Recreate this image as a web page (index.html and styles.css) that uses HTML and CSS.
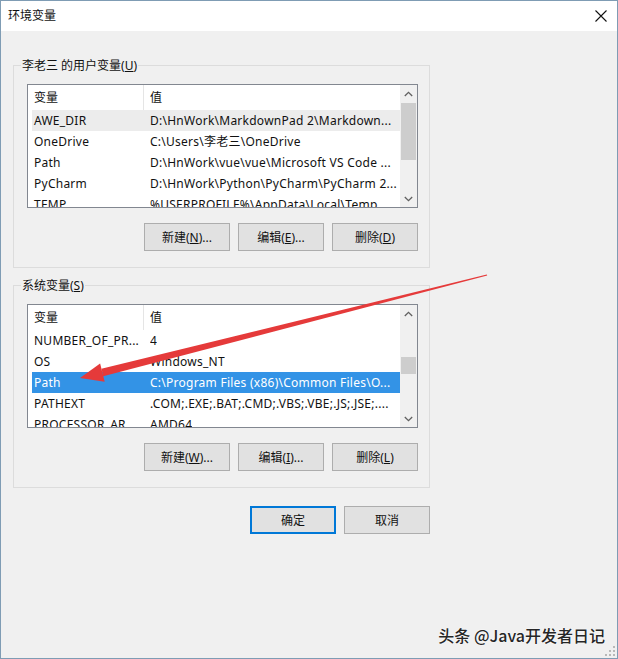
FILE: index.html
```html
<!DOCTYPE html>
<html lang="zh-CN">
<head>
<meta charset="utf-8">
<title>环境变量</title>
<link rel="stylesheet" href="styles.css">
</head>
<body>
<div class="window">
  <div class="titlebar">
    <span class="title">环境变量</span>
    <svg class="close" width="12" height="12" viewBox="0 0 12 12"><path d="M0.5 0.5 L11.5 11.5 M11.5 0.5 L0.5 11.5" stroke="#111" stroke-width="1.1" fill="none"/></svg>
  </div>
  <div class="content">
    <fieldset class="group">
      <legend class="legend">李老三 的用户变量(<u>U</u>)</legend>
      <div class="listbox">
        <div class="listmain">
          <div class="lheader"><span class="hcell hcell1">变量</span><span class="hcell">值</span></div>
          <div class="row hover"><span class="c1">AWE_DIR</span><span class="c2">D:\HnWork\MarkdownPad 2\Markdown...</span></div>
          <div class="row"><span class="c1">OneDrive</span><span class="c2">C:\Users\李老三\OneDrive</span></div>
          <div class="row"><span class="c1">Path</span><span class="c2">D:\HnWork\vue\vue\Microsoft VS Code ...</span></div>
          <div class="row"><span class="c1">PyCharm</span><span class="c2">D:\HnWork\Python\PyCharm\PyCharm 2...</span></div>
          <div class="row"><span class="c1">TEMP</span><span class="c2">%USERPROFILE%\AppData\Local\Temp</span></div>
        </div>
        <div class="scrollbar">
          <div class="sbtn"><svg width="9" height="6" viewBox="0 0 9 6"><path d="M0.8 5 L4.5 1.3 L8.2 5" stroke="#606060" stroke-width="1.3" fill="none"/></svg></div>
          <div class="track"><div class="thumb" style="margin-top:1px;height:57px"></div></div>
          <div class="sbtn"><svg width="9" height="6" viewBox="0 0 9 6"><path d="M0.8 1 L4.5 4.7 L8.2 1" stroke="#606060" stroke-width="1.3" fill="none"/></svg></div>
        </div>
      </div>
      <div class="btnrow">
        <button class="btn">新建(<u>N</u>)...</button>
        <button class="btn">编辑(<u>E</u>)...</button>
        <button class="btn">删除(<u>D</u>)</button>
      </div>
    </fieldset>

    <fieldset class="group group2">
      <legend class="legend">系统变量(<u>S</u>)</legend>
      <div class="listbox">
        <div class="listmain">
          <div class="lheader"><span class="hcell hcell1">变量</span><span class="hcell">值</span></div>
          <div class="row"><span class="c1">NUMBER_OF_PR...</span><span class="c2">4</span></div>
          <div class="row"><span class="c1">OS</span><span class="c2">Windows_NT</span></div>
          <div class="row selected"><span class="c1">Path</span><span class="c2">C:\Program Files (x86)\Common Files\O...</span></div>
          <div class="row"><span class="c1">PATHEXT</span><span class="c2">.COM;.EXE;.BAT;.CMD;.VBS;.VBE;.JS;.JSE;....</span></div>
          <div class="row"><span class="c1">PROCESSOR_AR...</span><span class="c2">AMD64</span></div>
        </div>
        <div class="scrollbar">
          <div class="sbtn"><svg width="9" height="6" viewBox="0 0 9 6"><path d="M0.8 5 L4.5 1.3 L8.2 5" stroke="#606060" stroke-width="1.3" fill="none"/></svg></div>
          <div class="track"><div class="thumb" style="margin-top:35px;height:17px"></div></div>
          <div class="sbtn"><svg width="9" height="6" viewBox="0 0 9 6"><path d="M0.8 1 L4.5 4.7 L8.2 1" stroke="#606060" stroke-width="1.3" fill="none"/></svg></div>
        </div>
      </div>
      <div class="btnrow">
        <button class="btn">新建(<u>W</u>)...</button>
        <button class="btn">编辑(<u>I</u>)...</button>
        <button class="btn">删除(<u>L</u>)</button>
      </div>
    </fieldset>

    <div class="dlgrow">
      <button class="btn btn-default">确定</button>
      <button class="btn">取消</button>
    </div>
  </div>

  <svg class="arrow" width="618" height="659" viewBox="0 0 618 659">
    <polygon points="487.2,275.6 486.8,274.4 101.4,368.8 103.2,376.2" fill="#e53a3a"/>
    <polygon points="80,378 100.1,363.4 104.7,381.8" fill="#e53a3a"/>
  </svg>

  <svg class="grip" width="10" height="10" viewBox="0 0 10 10">
    <rect x="8" y="0" width="2" height="2" fill="#b8b8b8"/>
    <rect x="4" y="4" width="2" height="2" fill="#b8b8b8"/>
    <rect x="8" y="4" width="2" height="2" fill="#b8b8b8"/>
    <rect x="0" y="8" width="2" height="2" fill="#b8b8b8"/>
    <rect x="4" y="8" width="2" height="2" fill="#b8b8b8"/>
    <rect x="8" y="8" width="2" height="2" fill="#b8b8b8"/>
  </svg>

  <div class="watermark">头条 @Java开发者日记</div>
</div>
</body>
</html>
```

FILE: styles.css
```css
html, body {
  margin: 0;
  padding: 0;
  background: #f0f0f0;
}

.window {
  position: relative;
  width: 618px;
  height: 659px;
  box-sizing: border-box;
  border: 1px solid #7f9cb4;
  background: #f0f0f0;
  font-family: "Noto Sans", "Noto Sans CJK SC", sans-serif;
  font-size: 12px;
  color: #111;
  overflow: hidden;
}

.titlebar {
  height: 30px;
  background: #fff;
  display: flex;
  align-items: center;
  justify-content: space-between;
  padding: 0 10px 0 7px;
}

.title {
  font-size: 12px;
  line-height: 14px;
}

.close {
  display: block;
  margin-top: -1px;
}

.content {
  padding: 28px 0 0 12px;
  width: 417px;
}

.group {
  margin: 0;
  border: 1px solid #dcdcdc;
  padding: 12px 11px 16px 13px;
  width: 417px;
  box-sizing: border-box;
  min-width: 0;
}

.group2 {
  margin-top: 11px;
}

.legend {
  padding: 0 1px;
  margin-left: -6px;
  line-height: 13px;
  font-size: 12px;
}

.listbox {
  display: flex;
  height: 124px;
  width: 391px;
  box-sizing: border-box;
  border: 1px solid #828790;
  background: #fff;
  overflow: hidden;
}

.listmain {
  flex: 1;
  overflow: hidden;
  min-width: 0;
}

.lheader {
  height: 25px;
  display: flex;
  align-items: center;
}

.hcell {
  padding-left: 6px;
  line-height: 25px;
}

.hcell1 {
  width: 109px;
  border-right: 1px solid #e5e5e5;
}

.row {
  display: flex;
  height: 21px;
  line-height: 21px;
  margin-left: 4px;
  white-space: nowrap;
  letter-spacing: 0.25px;
}

.row.hover {
  background: #ececec;
}

.row.selected {
  background: #3393e6;
  color: #fff;
}

.c1 {
  width: 116px;
  padding-left: 2px;
  flex: none;
  overflow: hidden;
}

.c2 {
  overflow: hidden;
}

.scrollbar {
  width: 17px;
  flex: none;
  display: flex;
  flex-direction: column;
  background: #f0f0f0;
}

.sbtn {
  height: 17px;
  flex: none;
  display: flex;
  align-items: center;
  justify-content: center;
}

.track {
  flex: 1;
  padding: 0 1px;
}

.thumb {
  background: #cdcdcd;
}

.btnrow {
  display: flex;
  justify-content: flex-end;
  gap: 8px;
  margin-top: 15px;
  width: 391px;
}

.btn {
  width: 86px;
  height: 28px;
  box-sizing: border-box;
  border: 1px solid #adadad;
  background: #e1e1e1;
  font-family: "Noto Sans", "Noto Sans CJK SC", sans-serif;
  font-size: 12px;
  color: #111;
  padding: 0;
  margin: 0;
}

.btn-default {
  border: 2px solid #0078d7;
}

.dlgrow {
  display: flex;
  justify-content: flex-end;
  gap: 8px;
  margin-top: 18px;
}

.arrow {
  position: absolute;
  left: -1px;
  top: -1px;
  pointer-events: none;
}

.grip {
  position: absolute;
  right: 2px;
  bottom: 2px;
}

.watermark {
  position: absolute;
  right: 12px;
  bottom: 11px;
  font-family: "Noto Sans CJK SC", sans-serif;
  font-size: 16px;
  font-weight: 500;
  color: #262626;
  text-shadow: 0 0 2px #fff, 0 0 1px #fff;
}
```
